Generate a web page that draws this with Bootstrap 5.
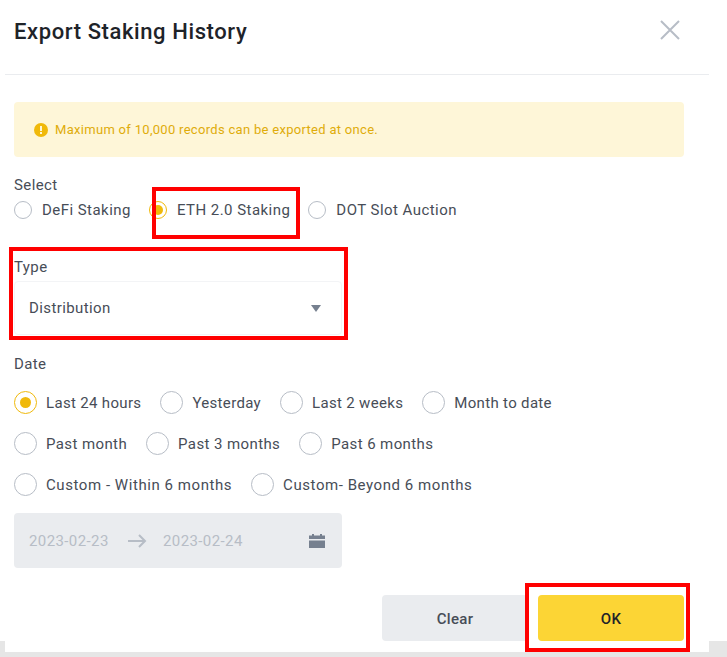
<!DOCTYPE html>
<html lang="en">
<head>
<meta charset="utf-8">
<title>Export Staking History</title>
<link href="https://cdn.jsdelivr.net/npm/bootstrap@5.3.0/dist/css/bootstrap.min.css" rel="stylesheet">
<style>
html,body{margin:0;height:657px;overflow:hidden;background:#fff}
body{font-family:"Roboto","Liberation Sans",sans-serif;color:#474d57;font-size:15px;letter-spacing:.4px;line-height:20px}
.stage{position:relative;width:727px;height:657px;overflow:hidden}
.dlg-head{height:75px;margin:0 18px 0 5px;padding:0 9px 0 9px;border-bottom:1px solid #eaecef}
.dlg-title{font-size:22px;font-weight:500;color:#1e2329;letter-spacing:.6px;margin:0;line-height:28px;padding-top:18px}
.dlg-x{margin:19px 19px 0 0;background:none;border:0;padding:0;line-height:0}
.dlg-body{padding:27px 43px 0 14px}
.warn-box{height:55px;background:#fef6d8;border-radius:4px;color:#e0ac0a;font-size:13px;letter-spacing:.3px;padding:0 20px;margin-bottom:18px;gap:7px}
.fld-label{height:20px;line-height:20px;color:#474d57}
.rad{width:18px;height:18px;border:1px solid #b7bdc6;border-radius:50%;flex:none;display:flex;align-items:center;justify-content:center}
.rad.big{width:23px;height:23px}
.rad.on{border-color:#f0b90b}
.rad.on::after{content:"";width:10px;height:10px;border-radius:50%;background:#f0b90b}
.rad.big.on::after{width:11px;height:11px}
.top-radios{height:30px;gap:18px;margin-bottom:32px;letter-spacing:.46px}
.top-radios .opt{gap:10px}
.type-box{width:328px;height:54px;border:1px solid #f3f4f6;border-radius:4px;padding:0 20px 0 14px;margin-top:4px;margin-bottom:19px}
.caret-down{width:0;height:0;border-left:5px solid transparent;border-right:5px solid transparent;border-top:7px solid #76808f}
.date-row{height:23px;gap:19px;margin-bottom:18px}
.date-row .opt{gap:9px}
.date-row.tight{letter-spacing:.33px}
.date-row.wide{letter-spacing:.56px;margin-bottom:17px}
.date-wrap{margin-top:17px}
.range-box{width:328px;height:55px;background:#eaecef;border-radius:4px;color:#b7bdc6;padding:0 17px 0 15px}
.range-box .dt{width:99px}
.range-box .dt-two{margin-left:15px}
.dlg-foot{gap:10px;margin-top:27px;width:670px;justify-content:flex-end}
.act{width:146px;height:46px;border:0;border-radius:4px;font-size:15px;font-weight:500;color:#1e2329;display:flex;align-items:center;justify-content:center;letter-spacing:.3px;padding:2px 0 0}
.act-clear{background:#eaecef;color:#474d57}
.act-ok{background:#fcd535}
.red-frame{position:absolute;border:4px solid #f00;pointer-events:none}
.rf1{left:152px;top:187px;width:148px;height:52px}
.rf2{left:9px;top:247px;width:339px;height:93px}
.rf3{left:525px;top:583px;width:165px;height:69px}
.edge-b{position:absolute;left:0;right:0;bottom:0;height:5px;background:#e6e6e6}
.edge-l{position:absolute;left:0;bottom:5px;width:5px;height:11px;background:#e6e6e6}
.edge-r{position:absolute;right:0;bottom:5px;width:18px;height:11px;background:#e6e6e6}
</style>
</head>
<body>
<div class="stage">
  <div class="dlg-head d-flex justify-content-between align-items-start">
    <h1 class="dlg-title">Export Staking History</h1>
    <button class="dlg-x" type="button" aria-label="Close"><svg width="22" height="22" viewBox="0 0 22 22"><path d="M2 2 20 20M20 2 2 20" stroke="#b7bdc6" stroke-width="2" fill="none"/></svg></button>
  </div>
  <div class="dlg-body">
    <div class="warn-box d-flex align-items-center">
      <svg width="14" height="14" viewBox="0 0 14 14"><circle cx="7" cy="7" r="7" fill="#f0b90b"/><rect x="6" y="3" width="2" height="5" fill="#fef6d8"/><rect x="6" y="9" width="2" height="2" fill="#fef6d8"/></svg>
      <span>Maximum of 10,000 records can be exported at once.</span>
    </div>
    <div class="fld-label">Select</div>
    <div class="top-radios d-flex align-items-center">
      <div class="opt d-flex align-items-center"><span class="rad"></span><span>DeFi Staking</span></div>
      <div class="opt d-flex align-items-center"><span class="rad on"></span><span>ETH 2.0 Staking</span></div>
      <div class="opt d-flex align-items-center"><span class="rad"></span><span>DOT Slot Auction</span></div>
    </div>
    <div class="fld-label">Type</div>
    <div class="type-box d-flex align-items-center justify-content-between"><span>Distribution</span><span class="caret-down"></span></div>
    <div class="fld-label">Date</div>
    <div class="date-wrap">
      <div class="date-row tight d-flex align-items-center">
        <div class="opt d-flex align-items-center"><span class="rad big on"></span><span>Last 24 hours</span></div>
        <div class="opt d-flex align-items-center"><span class="rad big"></span><span>Yesterday</span></div>
        <div class="opt d-flex align-items-center"><span class="rad big"></span><span>Last 2 weeks</span></div>
        <div class="opt d-flex align-items-center"><span class="rad big"></span><span>Month to date</span></div>
      </div>
      <div class="date-row d-flex align-items-center">
        <div class="opt d-flex align-items-center"><span class="rad big"></span><span>Past month</span></div>
        <div class="opt d-flex align-items-center"><span class="rad big"></span><span>Past 3 months</span></div>
        <div class="opt d-flex align-items-center"><span class="rad big"></span><span>Past 6 months</span></div>
      </div>
      <div class="date-row wide d-flex align-items-center">
        <div class="opt d-flex align-items-center"><span class="rad big"></span><span>Custom - Within 6 months</span></div>
        <div class="opt d-flex align-items-center"><span class="rad big"></span><span>Custom- Beyond 6 months</span></div>
      </div>
    </div>
    <div class="range-box d-flex align-items-center">
      <span class="dt">2023-02-23</span>
      <svg width="20" height="16" viewBox="0 0 20 16"><path d="M0 8H17M11 2l6 6-6 6" stroke="#b7bdc6" stroke-width="2" fill="none"/></svg>
      <span class="dt dt-two">2023-02-24</span>
      <svg class="ms-auto" width="16" height="16" viewBox="0 0 16 16"><path d="M0 2.500H3V1H5V2.500H11V1H13V2.500H16V6H0ZM0 7.500H16V15H0Z" fill="#76808f"/></svg>
    </div>
    <div class="dlg-foot d-flex">
      <button class="act act-clear" type="button">Clear</button>
      <button class="act act-ok" type="button">OK</button>
    </div>
  </div>
  <div class="edge-b"></div><div class="edge-l"></div><div class="edge-r"></div>
  <div class="red-frame rf1"></div><div class="red-frame rf2"></div><div class="red-frame rf3"></div>
</div>
<script src="https://cdn.jsdelivr.net/npm/bootstrap@5.3.0/dist/js/bootstrap.bundle.min.js"></script>
</body>
</html>
